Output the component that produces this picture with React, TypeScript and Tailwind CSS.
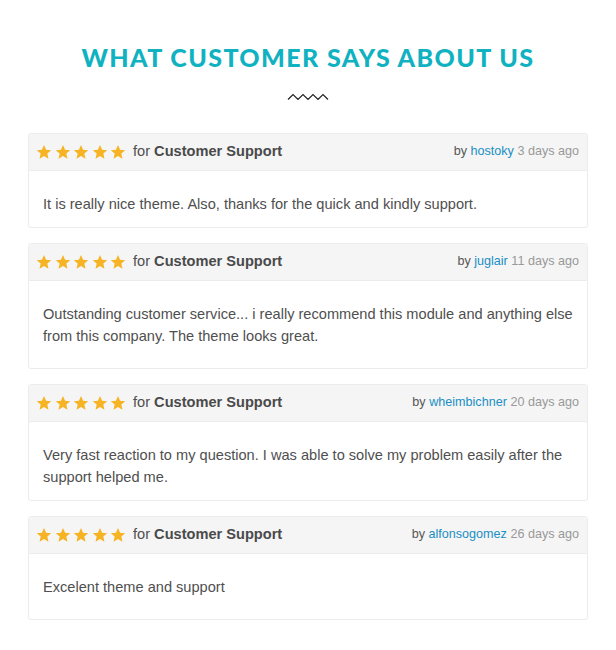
import React from 'react';

const reviews = [
  { user: 'hostoky', ago: '3 days ago', text: 'It is really nice theme. Also, thanks for the quick and kindly support.', pb: 'pb-[12px]' },
  { user: 'juglair', ago: '11 days ago', text: 'Outstanding customer service... i really recommend this module and anything else from this company. The theme looks great.', pb: 'pb-[21px]' },
  { user: 'wheimbichner', ago: '20 days ago', text: 'Very fast reaction to my question. I was able to solve my problem easily after the support helped me.', pb: 'pb-[12px]' },
  { user: 'alfonsogomez', ago: '26 days ago', text: 'Excelent theme and support', pb: 'pb-[21px]' },
];

const Star = () => (
  <svg width="16" height="16" viewBox="0 0 24 24" className="shrink-0">
    <path
      fill="#f6b425"
      d="M12 1.5l3.1 7.1 7.7.7-5.8 5.1 1.7 7.6L12 18l-6.7 4 1.7-7.6-5.8-5.1 7.7-.7z"
    />
  </svg>
);

const App = () => {
  return (
    <div className="w-[616px] h-[650px] bg-white font-['Liberation_Sans',Arial,sans-serif]">
      <div className="pt-[43px] flex flex-col items-center">
        <h2 className="font-['Lato',sans-serif] font-black text-[25px] leading-[28px] tracking-[1.4px] text-[#10b2c1]">
          WHAT CUSTOMER SAYS ABOUT US
        </h2>
        <svg width="42" height="8" viewBox="0 0 42 8" className="mt-[22px]">
          <polyline
            points="1,6.5 6,1.5 11,6.5 16,1.5 21,6.5 26,1.5 31,6.5 36,1.5 41,6.5"
            fill="none"
            stroke="#222"
            strokeWidth="1.2"
          />
        </svg>
      </div>

      <div className="mx-[28px] mt-[32px] flex flex-col gap-[15px]">
        {reviews.map((r) => (
          <div key={r.user} className="border border-[#ececec] rounded-[3px] overflow-hidden">
            <div className="h-[37px] bg-[#f5f5f5] border-b border-[#ececec] flex items-center justify-between pl-[7px] pr-[8px]">
              <div className="flex items-center">
                <div className="flex items-center gap-[2.5px]">
                  <Star />
                  <Star />
                  <Star />
                  <Star />
                  <Star />
                </div>
                <span className="ml-[7px] text-[14.6px] text-[#4f4f4f]">
                  for <b className="text-[#4a4a4a]">Customer Support</b>
                </span>
              </div>
              <div className="text-[12.6px] text-[#555] -mt-[2px]">
                by <a href="#" className="text-[#1a8fc4]">{r.user}</a>{' '}
                <span className="text-[#999]">{r.ago}</span>
              </div>
            </div>
            <p className={`px-[14px] pt-[22px] ${r.pb} text-[14.6px] leading-[22px] text-[#4f4f4f]`}>{r.text}</p>
          </div>
        ))}
      </div>
    </div>
  );
};

export default App;
